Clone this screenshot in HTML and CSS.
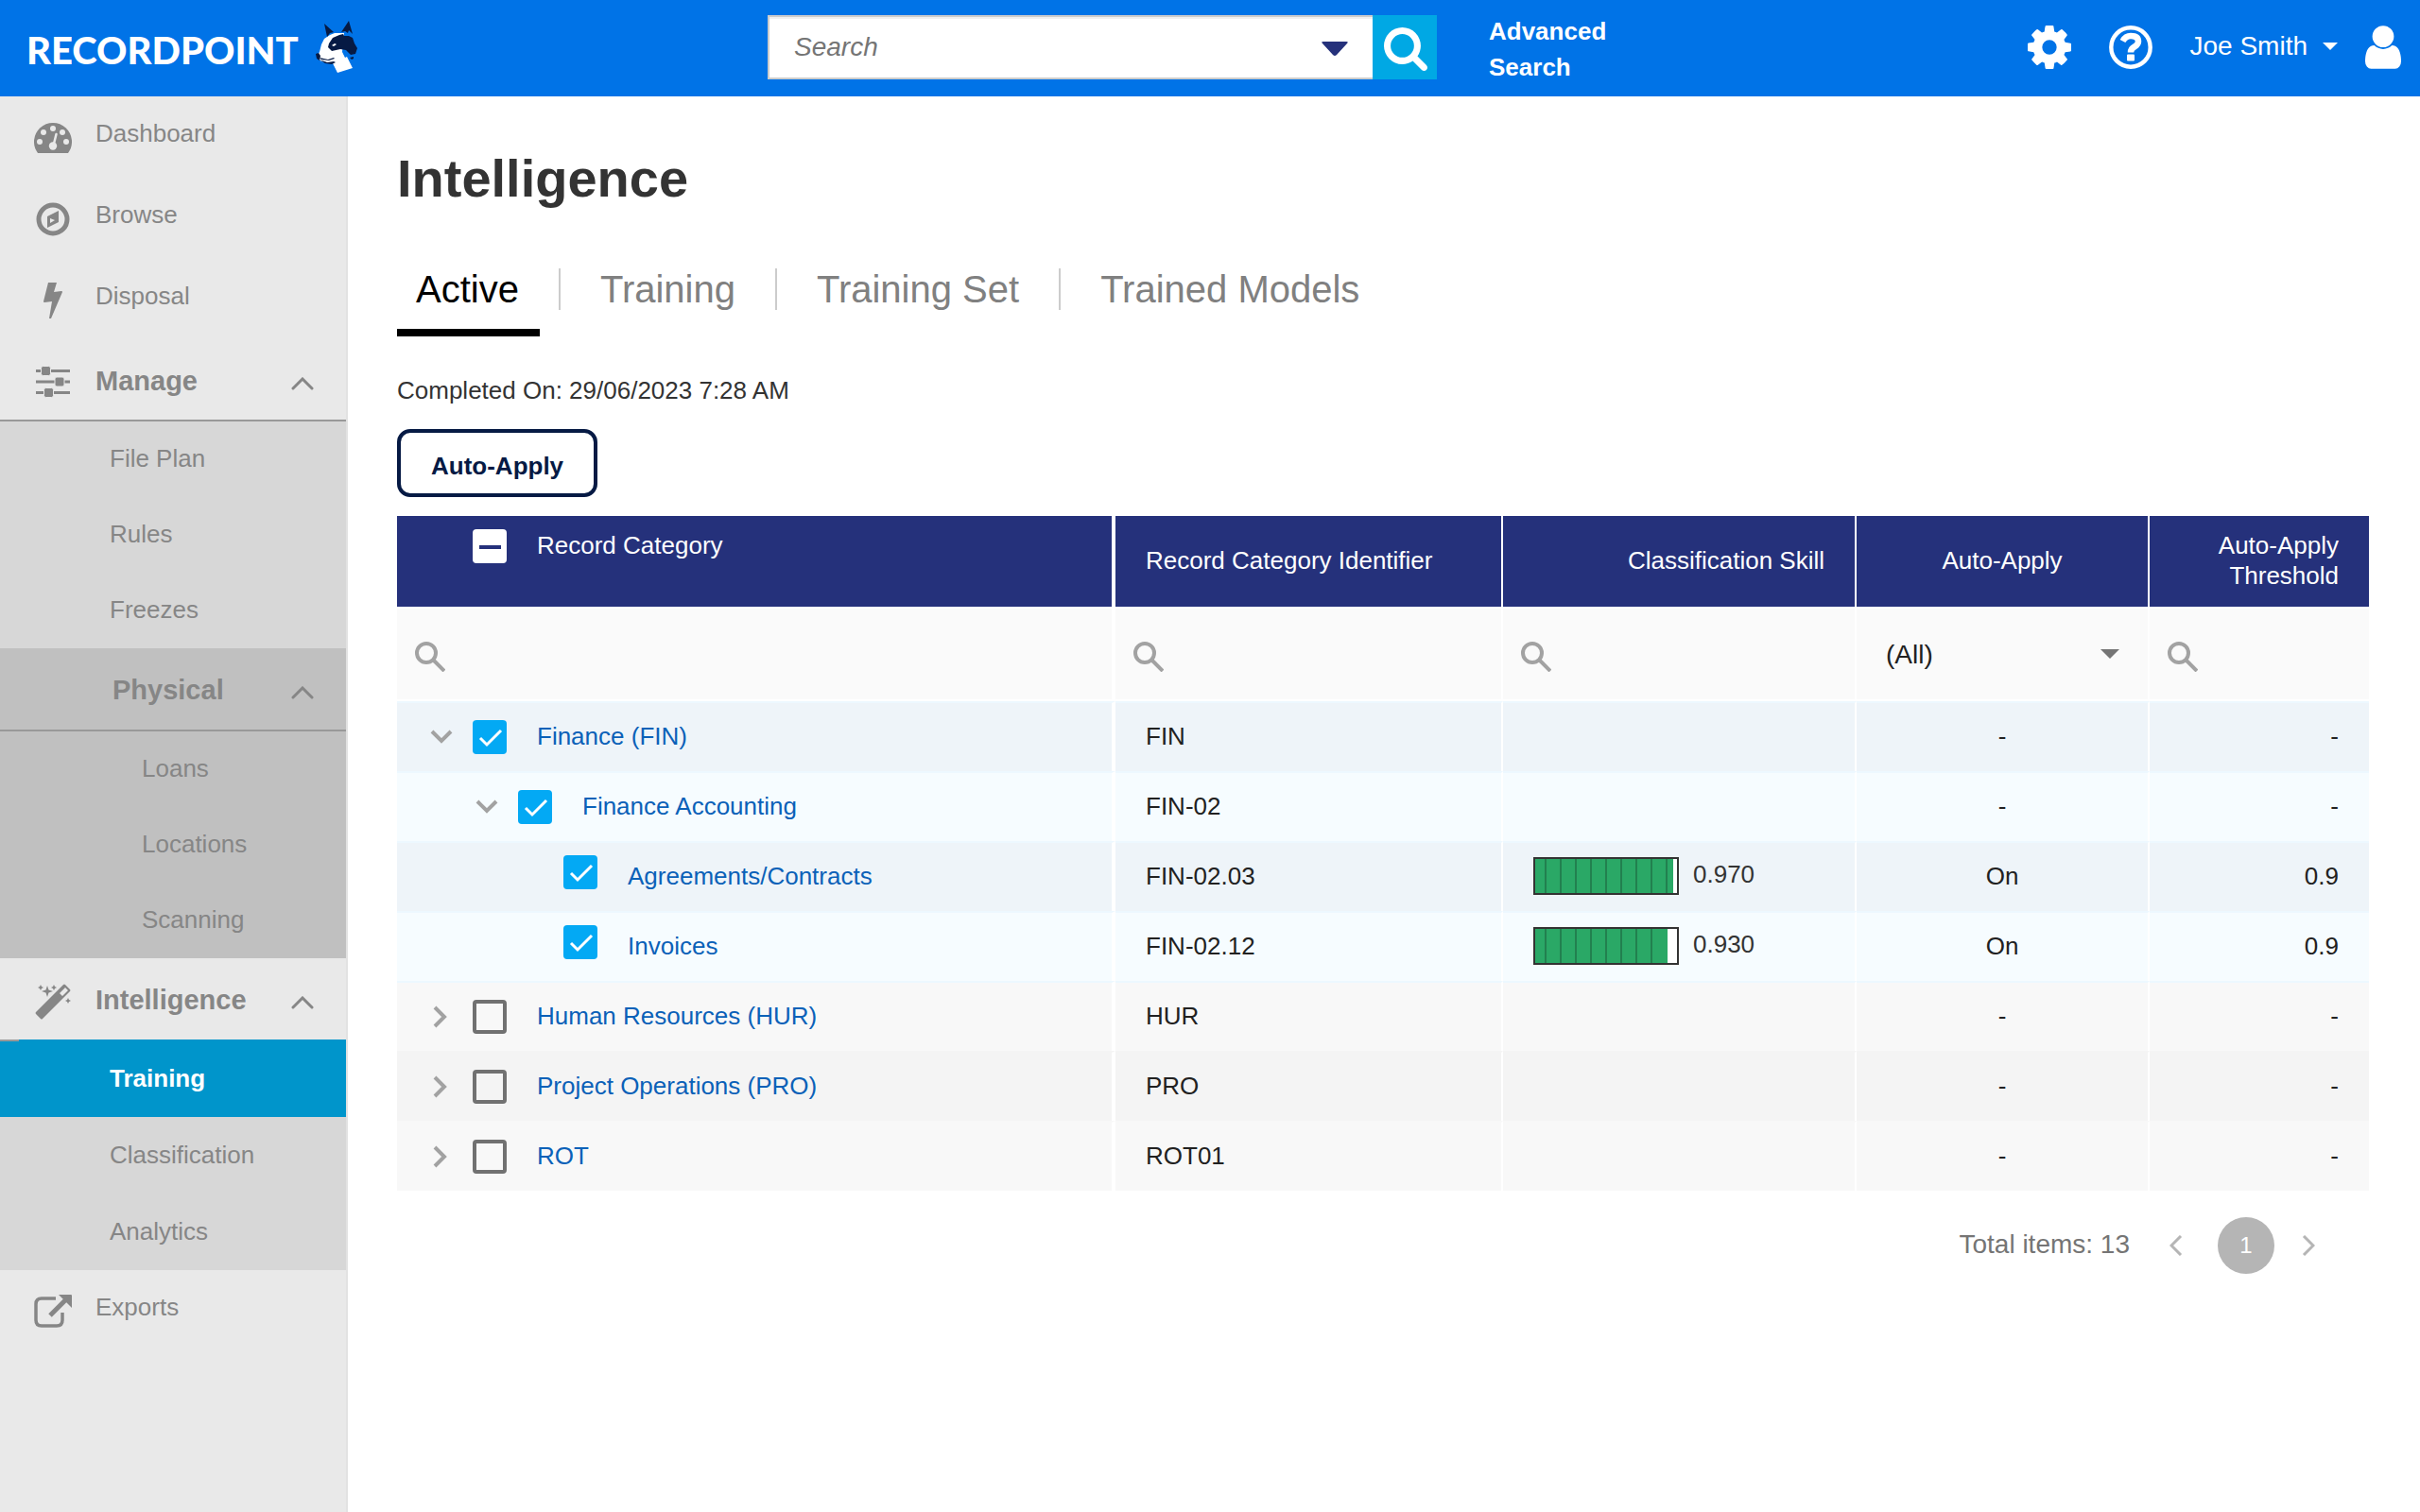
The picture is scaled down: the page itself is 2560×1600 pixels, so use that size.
FILE: index.html
```html
<!DOCTYPE html>
<html lang="en">
<head>
    <meta charset="UTF-8">
    <meta name="viewport" content="width=device-width, initial-scale=1.0">
    <title>Intelligence - RecordPoint</title>
    <link rel="stylesheet" href="styles.css">
</head>
<body>
    <!-- Shared icons -->
    <svg class="sprite" aria-hidden="true">
        <symbol id="chevron-up" viewBox="0 0 24 14"><path d="M2 12 12 2l10 10" fill="none" stroke="currentColor" stroke-width="3" stroke-linecap="round"/></symbol>
        <symbol id="chevron-down" viewBox="0 0 24 16"><path d="M2 2l10 10L22 2" fill="none" stroke="currentColor" stroke-width="4"/></symbol>
        <symbol id="chevron-right" viewBox="0 0 16 24"><path d="M2 2l10 10L2 22" fill="none" stroke="currentColor" stroke-width="4"/></symbol>
        <symbol id="filter-search" viewBox="0 0 32 32"><circle cx="12" cy="12" r="10" fill="none" stroke="currentColor" stroke-width="4"/><path d="M19 19l12 12" stroke="currentColor" stroke-width="4"/></symbol>
    </svg>

    <header class="header">
        <a class="brand" href="#">
            <span class="brand-name">RECORDPOINT</span>
            <svg class="brand-dog" viewBox="334 20 48 58" aria-hidden="true">
                <path fill="#fff" d="M351 36l5-2h10l-2 20 3 6 2-1 6 12-16 5-5-10-12-2-5-5 3-5 2-8 3-6z"/>
                <path fill="#061a44" d="M345 24l10 9-4 1-3 4zM371 21l4 14-4-4-1 3-3-2-4 1zM350 45l4-6 7-3 4-1 1 2h5l4 2 2 6 3 5-2 6-5 1-5-5-6-1-9 2-4-4zM336 56l3-1 2 3-1 5-3-2zM340 62l8 3 7-1 2 1-4 2-7-1zM340 60l9 2 6-2 1 1-6 2-8-1zM372 60l4-1 0 2-2 1z"/>
                <path fill="#fff" d="M353 47l3-2 2 1-3 2zM343 46l3-1-1 4z"/>
            </svg>
        </a>

        <form class="search">
            <input class="search-input" type="search" placeholder="Search" aria-label="Search">
            <button class="search-scope" type="button" aria-label="Search scope">
                <svg width="28" height="16" viewBox="0 0 28 16"><path fill="#25317b" d="M2 0h24q3 0 1 2L16 14q-2 2-4 0L1 2Q-1 0 2 0z"/></svg>
            </button>
            <button class="search-submit" type="submit" aria-label="Run search">
                <svg width="46" height="46" viewBox="64 128 1664 1664"><path fill="#fff" d="M1216 832q0-185-131.500-316.500t-316.500-131.500-316.500 131.500-131.500 316.500 131.500 316.500 316.500 131.500 316.500-131.500 131.500-316.500zm512 832q0 52-38 90t-90 38q-54 0-90-38l-343-342q-179 124-399 124-143 0-273.500-55.500t-225-150-150-225-55.500-273.500 55.500-273.500 150-225 225-150 273.500-55.500 273.500 55.500 225 150 150 225 55.500 273.500q0 220-124 399l343 343q37 37 37 90z"/></svg>
            </button>
        </form>
        <a class="advanced" href="#">Advanced<br>Search</a>

        <div class="tools">
            <button class="tool" type="button" aria-label="Settings">
                <svg width="46" height="46" viewBox="128 128 1536 1536"><path fill="#fff" d="M1152 896q0-106-75-181t-181-75-181 75-75 181 75 181 181 75 181-75 75-181zm512-109v222q0 12-8 23t-20 13l-185 28q-19 54-39 91 35 50 107 138 10 12 10 25t-9 23q-27 37-99 108t-94 71q-12 0-26-9l-138-108q-44 23-91 38-16 136-29 186-7 28-36 28h-222q-14 0-24.500-8.500t-11.500-21.500l-28-184q-49-16-90-37l-141 107q-10 9-25 9-14 0-25-11-126-114-165-168-7-10-7-23 0-12 8-23 15-21 51-66.500t54-70.500q-27-50-41-99l-183-27q-13-2-21-12.500t-8-23.500v-222q0-12 8-23t19-13l186-28q14-46 39-92-40-57-107-138-10-12-10-24 0-10 9-23 26-36 98.500-107.500t94.500-71.500q13 0 26 10l138 107q44-23 91-38 16-136 29-186 7-28 36-28h222q14 0 24.500 8.500t11.500 21.500l28 184q49 16 90 37l142-107q9-9 24-9 13 0 25 10 129 119 165 170 7 8 7 22 0 12-8 23-15 21-51 66.500t-54 70.500q26 50 41 98l183 28q13 2 21 12.500t8 23.500z"/></svg>
            </button>
            <button class="tool" type="button" aria-label="Help">
                <svg width="46" height="46" viewBox="0 0 46 46" fill="none" stroke="#fff"><circle cx="23" cy="23" r="20.700" stroke-width="4.400"/><path stroke-width="6.500" d="M14.500 16.500q3-5.500 8.500-5.500 8 0 8 6 0 3-4 5.500-4 2-4 6"/><path stroke="none" fill="#fff" d="M20 30.500h6q1 0 1 1v5q0 1-1 1h-6q-1 0-1-1v-5q0-1 1-1z"/></svg>
            </button>
            <button class="user" type="button">
                Joe Smith
                <svg width="16" height="8" viewBox="0 0 16 8"><path fill="#fff" d="M0 0h16L8 8z"/></svg>
            </button>
            <svg class="avatar" width="38" height="46" viewBox="256 128 1280 1536" aria-hidden="true"><path fill="#fff" d="M1536 1399q0 109-62.500 187t-150.500 78h-854q-88 0-150.500-78t-62.500-187q0-85 8.500-160.500t31.500-152 58.500-131 94-89 134.500-34.500q131 128 313 128t313-128q76 0 134.500 34.500t94 89 58.500 131 31.500 152 8.500 160.500zm-256-887q0 159-112.500 271.500t-271.500 112.500-271.500-112.500-112.500-271.500 112.500-271.500 271.500-112.500 271.500 112.500 112.500 271.500z"/></svg>
        </div>
    </header>

    <div class="layout">
        <nav class="sidebar">
            <a class="nav-item" href="#">
                <svg class="nav-icon" viewBox="0 0 40 40"><path fill="currentColor" d="M4 36A20 20 0 1 1 36 36z"/><g fill="#e9e9e9"><circle cx="6" cy="24" r="3"/><circle cx="10" cy="14" r="3"/><circle cx="20" cy="10" r="3"/><circle cx="30" cy="14" r="3"/><circle cx="34" cy="24" r="3"/><circle cx="20" cy="28.500" r="4.200"/></g><path d="M23.500 16 20.500 28" stroke="#e9e9e9" stroke-width="2.500" stroke-linecap="round"/></svg>
                Dashboard
            </a>
            <a class="nav-item" href="#">
                <svg class="nav-icon" viewBox="0 0 40 40"><circle cx="20" cy="20" r="15" fill="none" stroke="currentColor" stroke-width="5"/><path fill="currentColor" fill-rule="evenodd" d="M14 17l12-6v12l-12 6zM17 19v5l5-3z"/></svg>
                Browse
            </a>
            <a class="nav-item" href="#">
                <svg class="nav-icon" viewBox="0 0 40 40"><path fill="currentColor" d="M15 1h9l-3 10 8-1q1 0 1 1L18 39h-2l3-18-8 1q-1 0-1-1z"/></svg>
                Disposal
            </a>

            <a class="nav-item nav-heading" href="#">
                <svg class="nav-icon" viewBox="0 0 40 40"><path stroke="currentColor" stroke-width="3" d="M2 8.500h36M2 20h36M2 31.500h36"/><g fill="currentColor" stroke="#e9e9e9"><rect x="7.500" y="3.500" width="10" height="10" rx="2"/><rect x="22" y="15" width="10" height="10" rx="2"/><rect x="10.500" y="26.500" width="10" height="10" rx="2"/></g></svg>
                Manage
                <svg class="nav-chevron"><use href="#chevron-up"/></svg>
            </a>
            <div class="subnav">
                <a class="sub-item" href="#">File Plan</a>
                <a class="sub-item" href="#">Rules</a>
                <a class="sub-item" href="#">Freezes</a>
            </div>
            <div class="subnav subnav-deep">
                <a class="nav-item nav-heading" href="#">
                    Physical
                    <svg class="nav-chevron"><use href="#chevron-up"/></svg>
                </a>
                <a class="sub-item" href="#">Loans</a>
                <a class="sub-item" href="#">Locations</a>
                <a class="sub-item" href="#">Scanning</a>
            </div>

            <a class="nav-item nav-heading nav-open" href="#">
                <svg class="nav-icon" viewBox="0 0 40 40"><path fill="currentColor" fill-rule="evenodd" d="M2 32 31 3q1-1 2 0l5 5q1 1 0 2L9 39q-1 1-2 0l-5-5q-1-1 0-2zM27 12l3 3 6-6-3-3z"/><path fill="currentColor" d="M14 4l1.500 4.500L20 10l-4.500 1.500L14 16l-1.500-4.500L8 10l4.500-1.500zM7 3l1 2 2 1-2 1-1 2-1-2-2-1 2-1zM21 3l1 2 2 1-2 1-1 2-1-2-2-1 2-1zM36 17l1 2 2 1-2 1-1 2-1-2-2-1 2-1z"/></svg>
                Intelligence
                <svg class="nav-chevron"><use href="#chevron-up"/></svg>
            </a>
            <div class="subnav">
                <a class="sub-item active" href="#">Training</a>
                <a class="sub-item" href="#">Classification</a>
                <a class="sub-item" href="#">Analytics</a>
            </div>
            <a class="nav-item" href="#">
                <svg class="nav-icon" viewBox="0 0 40 40"><path fill="none" stroke="currentColor" stroke-width="3.500" d="M23 6H8q-6 0-6 6v17q0 6 6 6h16q6 0 6-6v-8"/><path stroke="currentColor" stroke-width="5" d="M17 24 34 7"/><path fill="currentColor" d="M26 2h13q1 0 1 1v13z"/></svg>
                Exports
            </a>
        </nav>

        <main class="content">
            <h1>Intelligence</h1>
            <nav class="tabs">
                <a class="tab current" href="#">Active</a>
                <a class="tab" href="#">Training</a>
                <a class="tab" href="#">Training Set</a>
                <a class="tab" href="#">Trained Models</a>
            </nav>
            <p class="completed">Completed On: 29/06/2023 7:28 AM</p>
            <button class="auto-apply" type="button">Auto-Apply</button>

            <table class="grid">
                <colgroup>
                    <col>
                    <col class="col-identifier">
                    <col class="col-skill">
                    <col class="col-apply">
                    <col class="col-threshold">
                </colgroup>
                <thead>
                    <tr>
                        <th class="select-all"><label class="tree"><span class="toggle"></span><input class="check mixed" type="checkbox"><span class="name">Record Category</span></label></th>
                        <th>Record Category Identifier</th>
                        <th class="right">Classification Skill</th>
                        <th class="center">Auto-Apply</th>
                        <th class="right">Auto-Apply Threshold</th>
                    </tr>
                    <tr class="filters">
                        <td><label class="filter"><svg><use href="#filter-search"/></svg><input type="text" aria-label="Filter record category"></label></td>
                        <td><label class="filter"><svg><use href="#filter-search"/></svg><input type="text" aria-label="Filter identifier"></label></td>
                        <td><label class="filter"><svg><use href="#filter-search"/></svg><input type="text" aria-label="Filter classification skill"></label></td>
                        <td>
                            <div class="filter-select">
                                <select aria-label="Filter auto-apply"><option>(All)</option><option>On</option><option>Off</option></select>
                                <svg width="20" height="10" viewBox="0 0 20 10"><path fill="#757575" d="M0 0h20L10 10z"/></svg>
                            </div>
                        </td>
                        <td><label class="filter"><svg><use href="#filter-search"/></svg><input type="text" aria-label="Filter threshold"></label></td>
                    </tr>
                </thead>
                <tbody>
                    <tr class="selected">
                        <td><div class="tree"><button class="toggle" type="button" aria-label="Collapse"><svg class="down"><use href="#chevron-down"/></svg></button><input class="check" type="checkbox" aria-label="Finance (FIN)" checked><a class="name" href="#">Finance (FIN)</a></div></td>
                        <td>FIN</td>
                        <td></td>
                        <td class="center">-</td>
                        <td class="right">-</td>
                    </tr>
                    <tr class="selected alt">
                        <td><div class="tree level-2"><button class="toggle" type="button" aria-label="Collapse"><svg class="down"><use href="#chevron-down"/></svg></button><input class="check" type="checkbox" aria-label="Finance Accounting" checked><a class="name" href="#">Finance Accounting</a></div></td>
                        <td>FIN-02</td>
                        <td></td>
                        <td class="center">-</td>
                        <td class="right">-</td>
                    </tr>
                    <tr class="selected">
                        <td><div class="tree level-3"><span class="toggle"></span><input class="check" type="checkbox" aria-label="Agreements/Contracts" checked><a class="name" href="#">Agreements/Contracts</a></div></td>
                        <td>FIN-02.03</td>
                        <td><div class="skill"><span class="bar"><span class="fill" style="width: 97%"></span></span><span class="score">0.970</span></div></td>
                        <td class="center">On</td>
                        <td class="right">0.9</td>
                    </tr>
                    <tr class="selected alt">
                        <td><div class="tree level-3"><span class="toggle"></span><input class="check" type="checkbox" aria-label="Invoices" checked><a class="name" href="#">Invoices</a></div></td>
                        <td>FIN-02.12</td>
                        <td><div class="skill"><span class="bar"><span class="fill" style="width: 93%"></span></span><span class="score">0.930</span></div></td>
                        <td class="center">On</td>
                        <td class="right">0.9</td>
                    </tr>
                    <tr class="after-selected">
                        <td><div class="tree"><button class="toggle" type="button" aria-label="Expand"><svg class="next"><use href="#chevron-right"/></svg></button><input class="check" type="checkbox" aria-label="Human Resources (HUR)"><a class="name" href="#">Human Resources (HUR)</a></div></td>
                        <td>HUR</td>
                        <td></td>
                        <td class="center">-</td>
                        <td class="right">-</td>
                    </tr>
                    <tr class="alt">
                        <td><div class="tree"><button class="toggle" type="button" aria-label="Expand"><svg class="next"><use href="#chevron-right"/></svg></button><input class="check" type="checkbox" aria-label="Project Operations (PRO)"><a class="name" href="#">Project Operations (PRO)</a></div></td>
                        <td>PRO</td>
                        <td></td>
                        <td class="center">-</td>
                        <td class="right">-</td>
                    </tr>
                    <tr>
                        <td><div class="tree"><button class="toggle" type="button" aria-label="Expand"><svg class="next"><use href="#chevron-right"/></svg></button><input class="check" type="checkbox" aria-label="ROT"><a class="name" href="#">ROT</a></div></td>
                        <td>ROT01</td>
                        <td></td>
                        <td class="center">-</td>
                        <td class="right">-</td>
                    </tr>
                </tbody>
            </table>

            <div class="pager">
                <span class="total">Total items: 13</span>
                <button class="step" type="button" aria-label="Previous page"><svg width="14" height="22" viewBox="0 0 14 22"><path d="M12 1 2 11l10 10" fill="none" stroke="currentColor" stroke-width="3"/></svg></button>
                <button class="page" type="button">1</button>
                <button class="step" type="button" aria-label="Next page"><svg width="14" height="22" viewBox="0 0 14 22"><path d="M2 1l10 10L2 21" fill="none" stroke="currentColor" stroke-width="3"/></svg></button>
            </div>
        </main>
    </div>
</body>
</html>
```
FILE: styles.css
```css
* {
    box-sizing: border-box;
}
body {
    margin: 0;
    min-height: 100vh;
    display: flex;
    flex-direction: column;
    background: #fff;
    color: #212121;
    font-family: "Liberation Sans", Arial, sans-serif;
    font-size: 26px;
    line-height: 32px;
}
a {
    text-decoration: none;
}
button, input, select {
    font-family: inherit;
    margin: 0;
    padding: 0;
    border: none;
    background: none;
}
button {
    cursor: pointer;
}
svg {
    display: block;
    flex: none;
}
.sprite {
    display: none;
}

/* Header */
.header {
    display: flex;
    align-items: center;
    height: 102px;
    padding: 0 20px 2px 0;
    background: #0073e7;
    color: #fff;
}
.brand {
    display: flex;
    align-items: center;
    gap: 16px;
    flex: 0 0 812px;
    padding-left: 28px;
    color: #fff;
}
.brand-name {
    padding-top: 6px;
    font-family: Lato, sans-serif;
    font-size: 40px;
    font-weight: 900;
    line-height: 48px;
}
.brand-dog {
    width: 48px;
    height: 58px;
}
.search {
    display: flex;
    width: 708px;
    height: 68px;
}
.search-input {
    flex: 1;
    min-width: 0;
    padding: 0 26px;
    border: 2px solid #ccc;
    border-right: none;
    background: #fff;
    box-shadow: inset 0 2px 0 #f0f0f0;
    font-size: 28px;
    font-style: italic;
    outline: none;
}
.search-input::placeholder {
    color: #757575;
}
.search-scope {
    display: flex;
    align-items: center;
    justify-content: center;
    width: 80px;
    padding-top: 4px;
    border: solid #ccc;
    border-width: 2px 0;
    background: #fff;
    box-shadow: inset 0 2px 0 #f0f0f0;
}
.search-submit {
    display: flex;
    align-items: center;
    justify-content: center;
    width: 68px;
    padding: 4px 0 0 2px;
    background: #00a8e4;
}
.advanced {
    margin-left: 55px;
    padding-top: 4px;
    color: #fff;
    font-weight: bold;
    line-height: 38px;
}
.tools {
    display: flex;
    align-items: center;
    margin-left: auto;
}
.tool {
    margin-right: 40px;
}
.user {
    display: flex;
    align-items: center;
    gap: 16px;
    margin-right: 29px;
    padding-bottom: 2px;
    color: #fff;
    font-size: 28px;
}

/* Sidebar */
.layout {
    display: flex;
    flex: 1;
}
.sidebar {
    flex: 0 0 368px;
    border-right: 2px solid #e2e2e2;
    background: #e9e9e9;
}
.nav-item {
    display: flex;
    align-items: center;
    height: 86px;
    padding: 0 34px 8px 36px;
    color: #868686;
}
.nav-icon {
    width: 40px;
    height: 40px;
    margin: 10px 25px 0 0;
}
.nav-heading {
    padding-top: 2px;
    padding-bottom: 0;
    border-bottom: 2px solid #999;
    font-size: 29px;
    font-weight: bold;
}
.nav-open {
    border-bottom: none;
}
.nav-heading .nav-icon {
    margin-top: 2px;
}
.nav-chevron {
    width: 24px;
    height: 14px;
    margin: 6px 0 0 auto;
}
.subnav {
    background: #d7d7d7;
}
.subnav-deep {
    background: #c0c0c0;
}
.subnav-deep .nav-heading {
    height: 88px;
    padding-left: 119px;
}
.sub-item {
    display: block;
    padding: 23px 0 25px 116px;
    color: #868686;
}
.subnav-deep .sub-item {
    padding-left: 150px;
}
.sub-item.active {
    padding-top: 25px;
    background: linear-gradient(#999, #999) 0 0 / 20px 2px no-repeat, #0095cb;
    color: #fff;
    font-weight: bold;
}
.active ~ .sub-item {
    padding-top: 24px;
}

/* Content */
.content {
    flex: 1;
    min-width: 0;
    padding: 55px 54px 0 52px;
}
h1 {
    margin: 0;
    color: #333;
    font-size: 56px;
    line-height: 64px;
}
.tabs {
    display: flex;
    align-items: flex-start;
    margin-top: 63px;
    font-size: 40px;
    line-height: 44px;
}
.tab {
    padding: 0 22px 20px 20px;
    border-bottom: 8px solid transparent;
    color: #808080;
}
.tab.current {
    border-bottom-color: #000;
    color: #000;
}
.tab + .tab::before {
    content: "";
    float: left;
    width: 2px;
    height: 44px;
    margin-right: 42px;
    background: #ccc;
}
.completed {
    margin: 41px 0 25px;
    color: #333;
}
.auto-apply {
    display: block;
    height: 72px;
    padding: 6px 32px 0;
    border: 4px solid #061a44;
    border-radius: 14px;
    color: #061a44;
    font-size: 26px;
    font-weight: bold;
}

/* Records table */
.grid {
    width: 100%;
    margin-top: 20px;
    border-spacing: 0;
    table-layout: fixed;
}
.col-identifier {
    width: 410px;
}
.col-skill {
    width: 374px;
}
.col-apply {
    width: 310px;
}
.col-threshold {
    width: 232px;
}
th, td {
    padding: 0 32px 2px;
    border-right: 2px solid #fff;
    text-align: left;
}
th:first-child, td:first-child {
    padding: 0 0 0 32px;
    border-right-width: 4px;
}
th:last-child, td:last-child {
    border-right: none;
}
th {
    height: 98px;
    border-bottom: 2px solid #fff;
    background: #25317b;
    color: #fff;
    font-weight: normal;
}
th.select-all {
    padding-top: 14px;
    vertical-align: top;
}
.right {
    text-align: right;
}
.center {
    text-align: center;
}
.filters td {
    height: 98px;
    padding: 0 19px;
    border-bottom: 2px solid #fff;
    background: #fafafa;
}
.filter {
    display: flex;
    align-items: center;
    gap: 12px;
    padding-top: 6px;
    color: #a2a2a2;
}
.filter svg {
    width: 32px;
    height: 32px;
}
.filter input {
    flex: 1;
    min-width: 0;
    height: 40px;
    font-size: 26px;
    outline: none;
}
.filter-select {
    display: grid;
    align-items: center;
    padding: 0 11px 0 12px;
}
.filter-select select, .filter-select svg {
    grid-area: 1 / 1;
}
.filter-select select {
    appearance: none;
    height: 40px;
    color: #212121;
    font-size: 28px;
}
.filter-select svg {
    justify-self: end;
    pointer-events: none;
}
tbody td {
    height: 74px;
    border-top: 2px solid #f8f8f8;
    background: #f8f8f8;
}
tbody .alt td {
    border-top-color: #f4f4f4;
    background: #f4f4f4;
}
tbody .selected td {
    border-top-color: #edf8ff;
    background: #eef4f9;
}
tbody .selected.alt td {
    background: #f6fcff;
}
tbody .after-selected td {
    border-top-color: #edf8ff;
}
.tree {
    display: flex;
    align-items: center;
}
.name {
    padding-bottom: 2px;
}
a.name {
    color: #0b61b8;
}
.level-2 {
    padding-left: 48px;
}
.level-3 {
    padding-left: 96px;
}
.level-3 .check {
    margin-bottom: 10px;
}
.toggle {
    display: flex;
    justify-content: center;
    width: 30px;
    margin-right: 18px;
    color: #a2a2a2;
}
.toggle .down {
    width: 24px;
    height: 16px;
}
.toggle .next {
    width: 16px;
    height: 24px;
    margin-right: 2px;
}
.check {
    appearance: none;
    flex: none;
    width: 36px;
    height: 36px;
    margin-right: 32px;
    border: 4px solid #717171;
    border-radius: 4px;
}
.check:checked {
    border: none;
    background: #03a9f4 url("data:image/svg+xml,%3Csvg xmlns='http://www.w3.org/2000/svg' viewBox='0 0 36 36'%3E%3Cpath d='M8 19l7 7L30 11' fill='none' stroke='white' stroke-width='3'/%3E%3C/svg%3E");
}
.check.mixed {
    border: none;
    background: linear-gradient(#25317b, #25317b) 7px 17px / 23px 4px no-repeat, #fff;
}
.skill {
    display: flex;
    align-items: center;
    gap: 15px;
    color: #333;
}
.bar {
    width: 154px;
    height: 40px;
    border: 2px solid #333;
    background: #fff;
}
.fill {
    display: block;
    height: 100%;
    background: repeating-linear-gradient(to right, transparent 0 14px, #22804f 14px 16px) -4px 0, #2aa866;
}
.score {
    padding-bottom: 4px;
}

/* Pager */
.pager {
    display: flex;
    align-items: center;
    justify-content: flex-end;
    padding: 28px 57px 0 0;
    color: #757575;
    font-size: 28px;
}
.total {
    padding-bottom: 2px;
}
.step {
    color: #b5b5b5;
}
.step:first-of-type {
    margin-left: 42px;
}
.page {
    width: 60px;
    height: 60px;
    margin: 0 29px 0 37px;
    border-radius: 50%;
    background: #b5b5b5;
    color: #fff;
    font-size: 24px;
}
```
